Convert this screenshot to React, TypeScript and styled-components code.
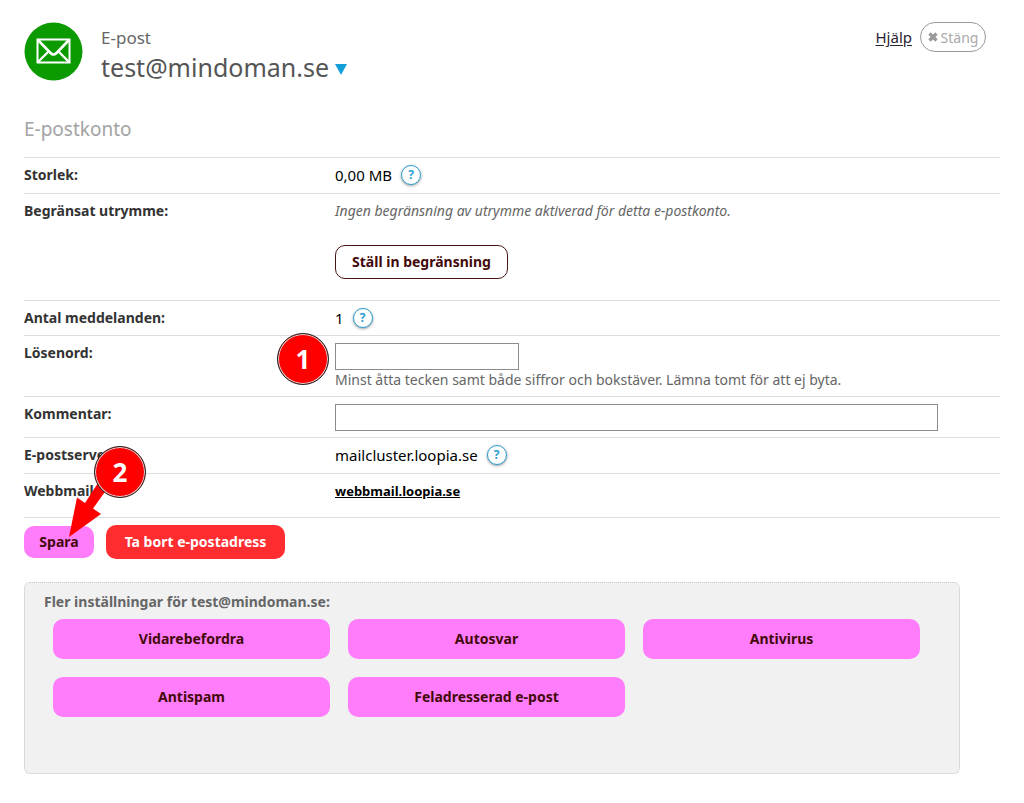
import React from "react";
import styled, { createGlobalStyle, css } from "styled-components";

const GlobalStyle = createGlobalStyle`
  *, *::before, *::after { box-sizing: border-box; }
  body {
    margin: 0;
    background: #fff;
    color: #000;
    font-family: "Noto Sans", "Open Sans", sans-serif;
    font-size: 15px;
    line-height: 20px;
  }
  button, input { font-family: inherit; }
`;

const Page = styled.main`
  padding: 22px 24px 24px;
`;

const Header = styled.header`
  display: flex;
  align-items: flex-start;
`;

const MailLogo = styled.svg`
  width: 60px;
  height: 60px;
  margin-right: 17px;
  flex: none;
`;

const Titles = styled.div`
  flex: 1;
  padding-top: 6px;
`;

const Kind = styled.div`
  font-size: 17px;
  line-height: 20px;
  color: #666;
`;

const Address = styled.h1`
  display: flex;
  align-items: center;
  gap: 6px;
  margin: 0;
  font-size: 25px;
  font-weight: 400;
  line-height: 38px;
  color: #555;
`;

const Switcher = styled.button`
  display: flex;
  padding: 4px 0 0;
  border: 0;
  background: none;
`;

const Tools = styled.div`
  display: flex;
  align-items: center;
  gap: 8px;
  padding-right: 14px;
`;

const HelpLink = styled.a`
  font-size: 15px;
  color: #2a2230;
  text-underline-offset: 2px;
`;

const CloseButton = styled.button`
  display: flex;
  align-items: center;
  justify-content: center;
  gap: 3px;
  width: 66px;
  height: 30px;
  padding: 0;
  border: 1px solid #999;
  border-radius: 15px;
  background: #fff;
  font-size: 14px;
  color: #aaa;
`;

const SectionTitle = styled.h2`
  margin: 30px 0 15px;
  font-size: 19px;
  font-weight: 400;
  line-height: 26px;
  color: #a3a3a3;
`;

const Row = styled.div<{ $height: number }>`
  position: relative;
  display: grid;
  grid-template-columns: 311px 1fr;
  align-items: start;
  min-height: ${(p) => p.$height}px;
  padding-top: 7px;
  border-top: 1px solid #ddd;
`;

const nameStyle = css`
  font-size: 14px;
  font-weight: 700;
  color: #333;
`;
const RowName = styled.div`
  ${nameStyle}
`;
const RowLabel = styled.label`
  ${nameStyle}
`;

const Value = styled.div`
  display: flex;
  align-items: center;
  gap: 9px;
  height: 20px;
`;

const HelpButton = styled.button`
  width: 20px;
  height: 20px;
  padding: 0;
  border: 1px solid #2a9fd0;
  border-radius: 50%;
  background: #fff;
  box-shadow: 0 1px 3px rgba(0, 0, 0, 0.4);
  font-size: 12px;
  font-weight: 700;
  line-height: 16px;
  color: #2a9fd0;
`;

const Note = styled.p<{ $italic?: boolean }>`
  margin: 0;
  font-size: 14px;
  line-height: 20px;
  font-style: ${(p) => (p.$italic ? "italic" : "normal")};
  color: #666;
`;

const TextBox = styled.input<{ $wide?: boolean }>`
  display: block;
  width: ${(p) => (p.$wide ? "calc(100% - 62px)" : "184px")};
  height: 27px;
  padding: 0 4px;
  border: 1px solid #8c8c8c;
  background: #fff;
  font-size: 14px;
`;

const WebLink = styled.a`
  font-size: 13px;
  font-weight: 700;
  color: #000;
`;

const buttonFace = {
  outline: css`
    border: 1px solid #4a1414;
    background: #fff;
    color: #430a0a;
  `,
  pink: css`
    border: 0;
    background: #ff7cfa;
    color: #430a0a;
  `,
  red: css`
    border: 0;
    background: #ff2d2f;
    color: #fff;
  `,
};

const Button = styled.button<{ $face: keyof typeof buttonFace; $height: number }>`
  height: ${(p) => p.$height}px;
  padding: 0 15px;
  border-radius: 10px;
  font-size: 14px;
  font-weight: 700;
  line-height: 20px;
  ${(p) => buttonFace[p.$face]}
`;

const LimitButton = styled(Button)`
  display: block;
  min-width: 173px;
  margin-top: 24px;
`;

const Actions = styled.div`
  display: flex;
  align-items: center;
  gap: 12px;
  padding-top: 7px;
  border-top: 1px solid #ddd;
`;

const SaveButton = styled(Button)`
  min-width: 70px;
`;

const DeleteButton = styled(Button)`
  min-width: 179px;
`;

const More = styled.section`
  min-height: 192px;
  margin: 23px 40px 0 0;
  padding: 9px 39px 0 19px;
  border: 1px dotted #c4c4c4;
  border-radius: 6px;
  background: #f1f1f1;
`;

const MoreTitle = styled.h3`
  margin: 0 0 7px;
  font-size: 14px;
  line-height: 20px;
  color: #666;
`;

const MoreGrid = styled.div`
  display: grid;
  grid-template-columns: repeat(3, 1fr);
  gap: 18px;
  padding-left: 9px;
`;

const Step = styled.div<{ $top: number; $left: number }>`
  position: absolute;
  z-index: 2;
  top: ${(p) => p.$top}px;
  left: ${(p) => p.$left}px;
  width: 52px;
  height: 52px;
`;

const StepNumber = styled.div`
  position: relative;
  display: flex;
  align-items: center;
  justify-content: center;
  width: 52px;
  height: 52px;
  border: 1px solid #222;
  border-radius: 50%;
  background: #f00;
  box-shadow: inset 0 0 0 1px #ddd;
  font-size: 26px;
  font-weight: 700;
  line-height: 50px;
  color: #fff;
`;

const Arrow = styled.svg`
  position: absolute;
  top: 26px;
  left: -26px;
  width: 60px;
  height: 66px;
  pointer-events: none;
`;

function Help({ topic }: { topic: string }) {
  return (
    <HelpButton type="button" aria-label={`Hjälp om ${topic}`}>
      ?
    </HelpButton>
  );
}

const settings = ["Vidarebefordra", "Autosvar", "Antivirus", "Antispam", "Feladresserad e-post"];

export default function App() {
  return (
    <>
      <GlobalStyle />
      <Page>
        <Header>
          <MailLogo viewBox="0 0 60 60" aria-hidden="true">
            <circle cx="29.5" cy="29.5" r="29" fill="#0b9a00" />
            <g fill="none" stroke="#fff" strokeWidth="2">
              <rect x="13.5" y="17.5" width="32" height="23" />
              <path d="M14 18 L26.5 31 Q29.5 34 32.5 31 L45 18" strokeWidth="2.6" />
              <path d="M14 40 L24.5 29.5 M45 40 L34.5 29.5" strokeWidth="2.4" />
            </g>
          </MailLogo>
          <Titles>
            <Kind>E-post</Kind>
            <Address>
              test@mindoman.se
              <Switcher type="button" aria-label="Byt konto">
                <svg width="12" height="11" viewBox="0 0 12 11">
                  <path d="M0 0H12L6 11Z" fill="#129fd8" />
                </svg>
              </Switcher>
            </Address>
          </Titles>
          <Tools>
            <HelpLink href="#help">Hjälp</HelpLink>
            <CloseButton type="button">
              <svg width="10" height="10" viewBox="0 0 10 10" aria-hidden="true">
                <path d="M1.5 1.5 8.5 8.5M8.5 1.5 1.5 8.5" stroke="#999" strokeWidth="3.2" />
              </svg>
              Stäng
            </CloseButton>
          </Tools>
        </Header>

        <SectionTitle>E-postkonto</SectionTitle>

        <form onSubmit={(e) => e.preventDefault()}>
          <Row $height={36}>
            <RowName>Storlek:</RowName>
            <Value>
              0,00 MB <Help topic="storlek" />
            </Value>
          </Row>
          <Row $height={107}>
            <RowName>Begränsat utrymme:</RowName>
            <div>
              <Note $italic>Ingen begränsning av utrymme aktiverad för detta e-postkonto.</Note>
              <LimitButton type="button" $face="outline" $height={34}>
                Ställ in begränsning
              </LimitButton>
            </div>
          </Row>
          <Row $height={35}>
            <RowName>Antal meddelanden:</RowName>
            <Value>
              1 <Help topic="antal meddelanden" />
            </Value>
          </Row>
          <Row $height={61}>
            <RowLabel htmlFor="password">Lösenord:</RowLabel>
            <div>
              <TextBox id="password" type="password" />
              <Note>Minst åtta tecken samt både siffror och bokstäver. Lämna tomt för att ej byta.</Note>
            </div>
            <Step $top={-3} $left={253}>
              <StepNumber>1</StepNumber>
            </Step>
          </Row>
          <Row $height={41}>
            <RowLabel htmlFor="comment">Kommentar:</RowLabel>
            <TextBox id="comment" type="text" $wide />
          </Row>
          <Row $height={36}>
            <RowName>E-postserver:</RowName>
            <Value>
              mailcluster.loopia.se <Help topic="e-postserver" />
            </Value>
          </Row>
          <Row $height={44}>
            <RowName>Webbmail:</RowName>
            <WebLink href="#webmail">webbmail.loopia.se</WebLink>
            <Step $top={-28} $left={70}>
              <Arrow viewBox="0 0 60 66" aria-hidden="true">
                <path d="M1 65 L9 25.5 L17 31 L30 11 L39 17 L25 36.5 L33 42 Z" fill="#f00" />
              </Arrow>
              <StepNumber>2</StepNumber>
            </Step>
          </Row>
          <Actions>
            <SaveButton type="submit" $face="pink" $height={32}>
              Spara
            </SaveButton>
            <DeleteButton type="button" $face="red" $height={34}>
              Ta bort e-postadress
            </DeleteButton>
          </Actions>
        </form>

        <More>
          <MoreTitle>Fler inställningar för test@mindoman.se:</MoreTitle>
          <MoreGrid>
            {settings.map((name) => (
              <Button key={name} type="button" $face="pink" $height={40}>
                {name}
              </Button>
            ))}
          </MoreGrid>
        </More>
      </Page>
    </>
  );
}
